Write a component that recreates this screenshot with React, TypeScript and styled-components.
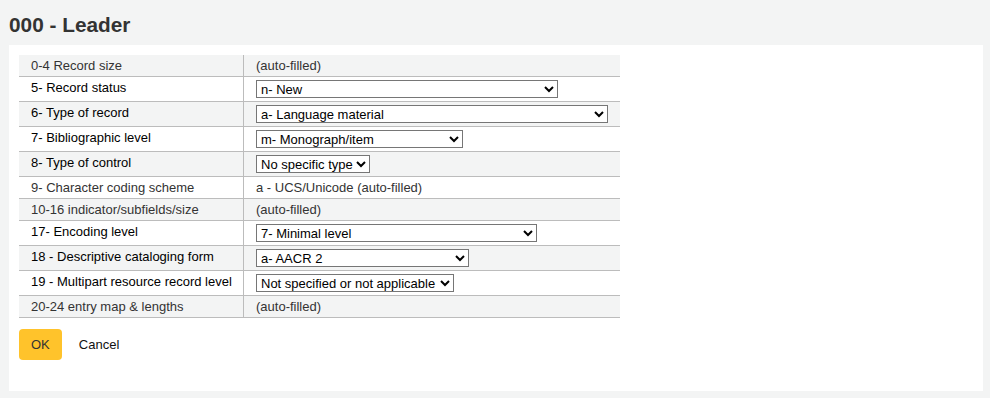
import { FC } from 'react'
import styled, { createGlobalStyle } from 'styled-components'

const GlobalStyle = createGlobalStyle`
  html, body {
    margin: 0;
    padding: 0;
    background: #f3f4f4;
    font-family: "Liberation Sans", Arial, sans-serif;
    font-size: 13px;
    color: #333;
  }
`

interface LeaderRow {
  label: string;
  value?: string;
  options?: string[];
  width?: number;
}

// 000 leader positions
const rows: LeaderRow[] = [
  { label: '0-4 Record size', value: '(auto-filled)' },
  { label: '5- Record status', options: ['n- New', 'a- Increase in encoding level', 'c- Corrected or revised', 'd- Deleted', 'p- Increase in encoding level from prepublication'], width: 302 },
  { label: '6- Type of record', options: ['a- Language material', 'c- Notated music', 'e- Cartographic material', 'g- Projected medium'], width: 352 },
  { label: '7- Bibliographic level', options: ['m- Monograph/item', 'a- Monographic component part', 's- Serial'], width: 207 },
  { label: '8- Type of control', options: ['No specific type', 'a- Archival'], width: 114 },
  { label: '9- Character coding scheme', value: 'a - UCS/Unicode (auto-filled)' },
  { label: '10-16 indicator/subfields/size', value: '(auto-filled)' },
  { label: '17- Encoding level', options: ['7- Minimal level', 'Full level', '1- Full level, material not examined'], width: 281 },
  { label: '18 - Descriptive cataloging form', options: ['a- AACR 2', 'c- ISBD punctuation omitted', 'i- ISBD punctuation included'], width: 213 },
  { label: '19 - Multipart resource record level', options: ['Not specified or not applicable', 'a- Set', 'b- Part with independent title'], width: 198 },
  { label: '20-24 entry map & lengths', value: '(auto-filled)' },
]

const Page = styled.div`
  padding: 0 7px 0 9px;
`

const Title = styled.h1`
  margin: 13px 0 8px;
  font-size: 20.8px;
  line-height: 24px;
  font-weight: bold;
  color: #333;
`

const Panel = styled.div`
  background: #fff;
  padding: 10px 10px 31px;
`

const Table = styled.table`
  width: 601px;
  table-layout: fixed;
  border-collapse: collapse;
`

const Row = styled.tr`
  &:nth-child(odd) {
    background: #f3f4f4;
  }
  border-bottom: 1px solid #bcbcbc;
`

const LabelCell = styled.td<{ $field?: boolean }>`
  width: 200px;
  padding: 3px 12px;
  line-height: 15px;
  white-space: nowrap;
  vertical-align: top;
  border-right: 1px solid #bcbcbc;
  color: ${({ $field }) => ($field ? '#000' : '#333')};
`

const ValueCell = styled.td`
  padding: 3px 12px;
  line-height: 15px;
  color: #333;
`

const Select = styled.select<{ $width?: number }>`
  display: block;
  margin: 0;
  width: ${({ $width }) => $width || 120}px;
  height: 18px;
  font-family: "Liberation Sans", Arial, sans-serif;
  font-size: 13px;
  color: #000;
  background: #fff;
`

const Actions = styled.div`
  display: flex;
  align-items: center;
  gap: 17px;
  margin-top: 11px;
`

const OkButton = styled.button`
  height: 31px;
  padding: 0 12px;
  border: none;
  border-radius: 4px;
  background: #ffc32b;
  font-family: "Liberation Sans", Arial, sans-serif;
  font-size: 13px;
  color: #333;
`

const CancelLink = styled.a`
  color: #111;
  text-decoration: none;
  font-size: 13px;
`

const App: FC = () => {
  return (
    <Page>
      <GlobalStyle />
      <Title>000 - Leader</Title>
      <Panel>
        <Table>
          <tbody>
            {rows.map((row) => (
              <Row key={row.label}>
                <LabelCell $field={!!row.options}>{row.label}</LabelCell>
                <ValueCell>
                  {row.options ? (
                    <Select $width={row.width} defaultValue={row.options[0]}>
                      {row.options.map((o) => (
                        <option key={o}>{o}</option>
                      ))}
                    </Select>
                  ) : (
                    row.value
                  )}
                </ValueCell>
              </Row>
            ))}
          </tbody>
        </Table>
        <Actions>
          <OkButton>OK</OkButton>
          <CancelLink href="#">Cancel</CancelLink>
        </Actions>
      </Panel>
    </Page>
  )
}

export default App
